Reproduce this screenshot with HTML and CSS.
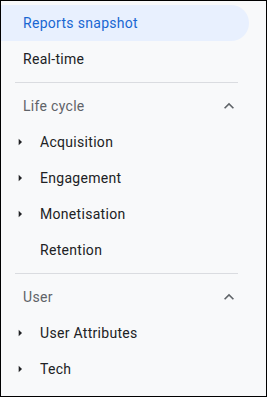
FILE: index.html
```html
<!DOCTYPE html>
<html lang="en">
<head>
  <meta charset="UTF-8" />
  <meta name="viewport" content="width=device-width, initial-scale=1.0"/>
  <title>Reports</title>
  <link rel="stylesheet" href="styles.css">
</head>
<body>

<nav class="sidebar">
  <a class="item active">Reports snapshot</a>
  <a class="item">Real-time</a>

  <div class="divider"></div>

  <div class="section">
    <span>Life cycle</span>
    <svg class="chevron" viewBox="0 0 24 24"><path d="M12 8l-6 6 1.41 1.41L12 10.83l4.59 4.58L18 14z"/></svg>
  </div>
  <a class="item sub">
    <svg class="caret" viewBox="0 0 24 24"><path d="M10 17l5-5-5-5v10z"/></svg>
    Acquisition
  </a>
  <a class="item sub">
    <svg class="caret" viewBox="0 0 24 24"><path d="M10 17l5-5-5-5v10z"/></svg>
    Engagement
  </a>
  <a class="item sub">
    <svg class="caret" viewBox="0 0 24 24"><path d="M10 17l5-5-5-5v10z"/></svg>
    Monetisation
  </a>
  <a class="item sub leaf">Retention</a>

  <div class="divider"></div>

  <div class="section">
    <span>User</span>
    <svg class="chevron" viewBox="0 0 24 24"><path d="M12 8l-6 6 1.41 1.41L12 10.83l4.59 4.58L18 14z"/></svg>
  </div>
  <a class="item sub">
    <svg class="caret" viewBox="0 0 24 24"><path d="M10 17l5-5-5-5v10z"/></svg>
    User Attributes
  </a>
  <a class="item sub">
    <svg class="caret" viewBox="0 0 24 24"><path d="M10 17l5-5-5-5v10z"/></svg>
    Tech
  </a>
</nav>

</body>
</html>
```

FILE: styles.css
```css
* {
  box-sizing: border-box;
}
body {
  margin: 0;
  font-family: Roboto, 'Noto Sans', sans-serif;
  font-size: 14px;
  letter-spacing: 0.3px;
}
.sidebar {
  width: 267px;
  height: 397px;
  border: 1px solid #000;
  background: #f8f9fa;
  padding-top: 4px;
  display: flex;
  flex-direction: column;
}
.item {
  height: 36px;
  display: flex;
  align-items: center;
  padding-left: 22px;
  color: #202124;
  cursor: pointer;
}
.item.active {
  background: #e8f0fe;
  color: #1967d2;
  margin-right: 17px;
  border-radius: 0 18px 18px 0;
}
.item.sub {
  padding-left: 11px;
  gap: 12px;
}
.item.leaf {
  padding-left: 39px;
}
.caret {
  width: 16px;
  height: 16px;
  fill: #202124;
}
.divider {
  height: 1px;
  background: #dadce0;
  margin: 5px 28px 5px 14px;
}
.section {
  height: 36px;
  display: flex;
  align-items: center;
  justify-content: space-between;
  padding: 0 27px 0 22px;
  color: #5f6368;
}
.chevron {
  width: 20px;
  height: 20px;
  fill: #5f6368;
}
```
